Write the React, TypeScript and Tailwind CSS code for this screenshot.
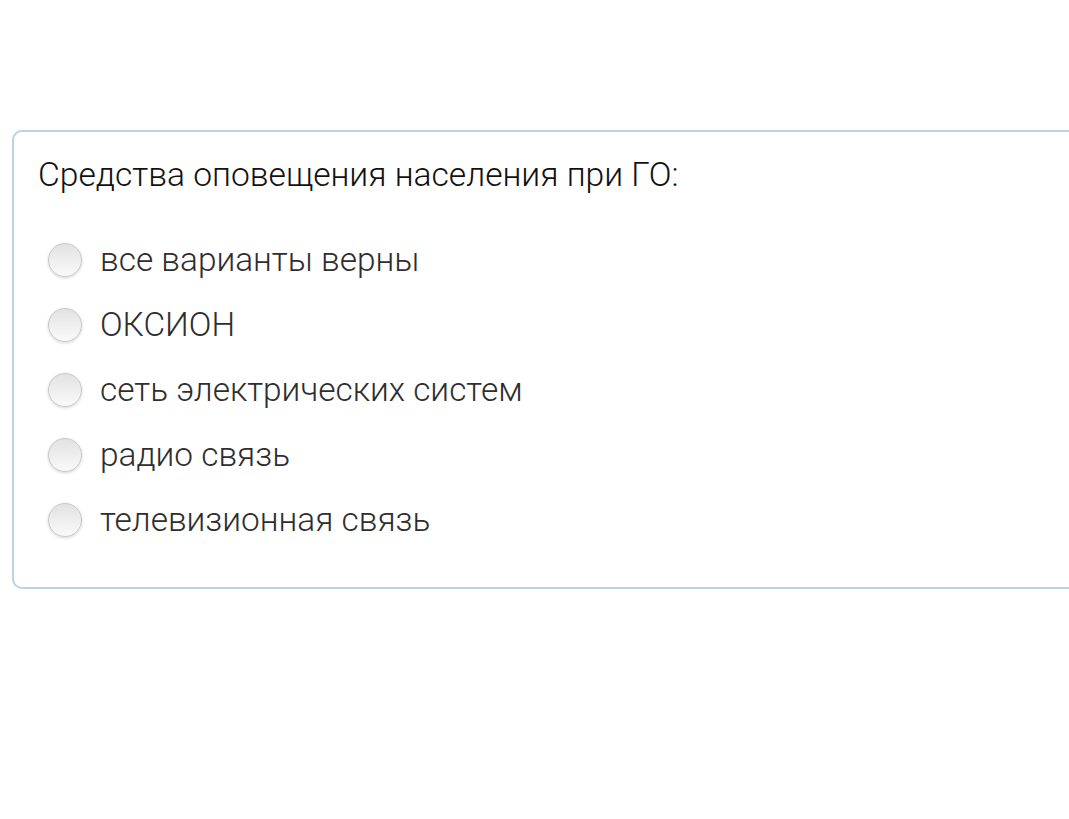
const options = [
  'все варианты верны',
  'ОКСИОН',
  'сеть электрических систем',
  'радио связь',
  'телевизионная связь',
];

const App = () => {
  return (
    <div className="min-h-[819px] w-[1069px] overflow-hidden bg-white" style={{ fontFamily: 'Roboto, "Noto Sans", sans-serif' }}>
      <div className="ml-[12px] mt-[130px] w-[1100px] rounded-[10px] border-2 border-[#bdd2e0] pl-[24px] pt-[23px] pb-[35px]">
        <div className="text-[33.6px] font-light leading-[40px] text-[#111]">Средства оповещения населения при ГО:</div>
        <div className="ml-[10px] mt-[32px] flex flex-col">
          {options.map(opt => (
            <label key={opt} className="flex h-[65px] items-center gap-[18px]">
              <span className="h-[34px] w-[34px] shrink-0 rounded-full border border-[#c8c8c8] bg-gradient-to-b from-[#e2e2e2] to-[#fafafa] shadow-[0_1px_3px_rgba(0,0,0,0.18)]" />
              <span className="text-[33.4px] font-light leading-[40px] text-[#2e2e2e]">{opt}</span>
            </label>
          ))}
        </div>
      </div>
    </div>
  );
};

export default App;
